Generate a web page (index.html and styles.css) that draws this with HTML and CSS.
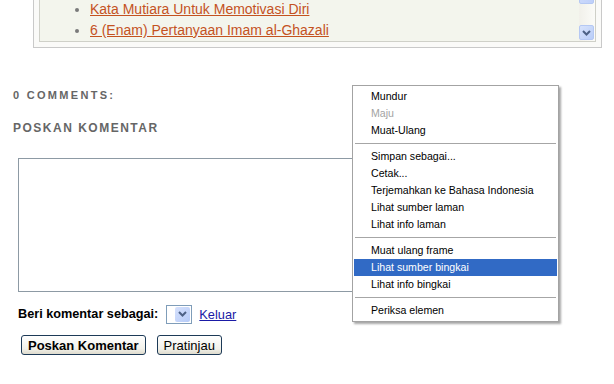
FILE: index.html
```html
<!DOCTYPE html>
<html lang="id">
<head>
    <meta charset="UTF-8">
    <title>Komentar</title>
    <link rel="stylesheet" href="styles.css">
</head>
<body>
    <!-- Related posts box (scrolled to the bottom) -->
    <div class="related">
        <div class="related-inner">
            <ul class="post-list">
                <li><a href="#">Kata Mutiara Untuk Memotivasi Diri</a></li>
                <li><a href="#">6 (Enam) Pertanyaan Imam al-Ghazali</a></li>
            </ul>
            <div class="scrollbar">
                <div class="scroll-thumb"></div>
                <div class="scroll-track"></div>
                <div class="scroll-btn">
                    <svg width="9" height="6" viewBox="0 0 9 6"><path d="M1 1 L4.5 4.5 L8 1" fill="none" stroke="#4d6185" stroke-width="2"/></svg>
                </div>
            </div>
        </div>
    </div>

    <!-- Comments -->
    <div class="comments">
        <h4 class="comments-title">0 Comments:</h4>
        <h4 class="form-title">Poskan Komentar</h4>
        <textarea class="comment-box"></textarea>

        <div class="identity">
            <label>Beri komentar sebagai:</label>
            <span class="select">
                <span class="select-btn">
                    <svg width="9" height="6" viewBox="0 0 9 6"><path d="M1 1 L4.5 4.5 L8 1" fill="none" stroke="#4d6185" stroke-width="2"/></svg>
                </span>
            </span>
            <a href="#" class="logout">Keluar</a>
        </div>

        <div class="actions">
            <button class="btn btn-primary">Poskan Komentar</button>
            <button class="btn">Pratinjau</button>
        </div>
    </div>

    <!-- Browser context menu -->
    <ul class="context-menu">
        <li>Mundur</li>
        <li class="disabled">Maju</li>
        <li>Muat-Ulang</li>
        <li class="sep"></li>
        <li>Simpan sebagai...</li>
        <li>Cetak...</li>
        <li>Terjemahkan ke Bahasa Indonesia</li>
        <li>Lihat sumber laman</li>
        <li>Lihat info laman</li>
        <li class="sep"></li>
        <li>Muat ulang frame</li>
        <li class="active">Lihat sumber bingkai</li>
        <li>Lihat info bingkai</li>
        <li class="sep"></li>
        <li>Periksa elemen</li>
    </ul>
</body>
</html>
```

FILE: styles.css
```css
/* Reset */
* {
    margin: 0;
    padding: 0;
    box-sizing: border-box;
}

body {
    background-color: #fff;
    font-family: "Liberation Sans", Arial, sans-serif;
    font-size: 13px;
    color: #000;
    position: relative;
}

/* Related posts box */
.related {
    margin: -20px 0 0 33px;
    width: 569px;
    padding: 5px;
    border: 1px solid #c9c9c9;
    background-color: #fafaf8;
}

.related-inner {
    display: flex;
    height: 56px;
    border: 1px solid #cfd0c8;
    background-color: #f3f5ed;
}

.post-list {
    flex: 1;
    display: flex;
    flex-direction: column;
    justify-content: flex-end;
    padding-left: 50px;
    list-style: disc;
    color: #7a7a7a;
}

.post-list li {
    line-height: 20px;
}

.post-list a {
    color: #c4521f;
    font-size: 14px;
}

/* Fake scrollbar */
.scrollbar {
    width: 16px;
    display: flex;
    flex-direction: column;
    background: linear-gradient(to right, #f1f0ea, #fbfbf8);
    padding-right: 1px;
}

.scroll-thumb {
    height: 17px;
    border: 1px solid #b5c8f3;
    border-radius: 2px;
    background: linear-gradient(to right, #cad8fb, #bfd0fa);
}

.scroll-track {
    flex: 1;
}

.scroll-btn {
    height: 15px;
    margin-bottom: 1px;
    display: flex;
    align-items: center;
    justify-content: center;
    border: 1px solid #b5c8f3;
    border-radius: 2px;
    background: linear-gradient(to bottom right, #d8e3fc, #b9cdf8);
}

/* Comments */
.comments {
    padding-left: 13px;
}

.comments-title,
.form-title {
    color: #666;
    font-family: "Liberation Sans", Arial, sans-serif;
    font-weight: bold;
    text-transform: uppercase;
}

.comments-title {
    margin-top: 41px;
    font-size: 11px;
    line-height: 13px;
    letter-spacing: 2.3px;
}

.form-title {
    margin-top: 19px;
    font-size: 12px;
    line-height: 14px;
    letter-spacing: 1.5px;
}

.comment-box {
    display: block;
    margin: 23px 0 0 5px;
    width: 420px;
    height: 134px;
    border: 1px solid #8d9aa4;
    resize: none;
    background-color: #fff;
}

.identity {
    display: flex;
    align-items: center;
    margin: 12px 0 0 5px;
    height: 20px;
}

.identity label {
    font-weight: bold;
    font-size: 12.7px;
}

.select {
    display: flex;
    justify-content: flex-end;
    width: 26px;
    height: 19px;
    margin-left: 8px;
    border: 1px solid #7f9db9;
    padding: 1px;
    background-color: #fff;
}

.select-btn {
    width: 15px;
    display: flex;
    align-items: center;
    justify-content: center;
    border-radius: 2px;
    background: linear-gradient(to bottom right, #d6e1fc, #b6cbf8);
}

.logout {
    margin-left: 7px;
    color: #1a1aa6;
    font-size: 12.8px;
}

.actions {
    display: flex;
    gap: 11px;
    margin: 11px 0 0 8px;
}

.btn {
    height: 20px;
    padding: 0 6px;
    border: 1px solid #1d3a57;
    border-radius: 3px;
    background: linear-gradient(to bottom, #ffffff, #f2f1ea 70%, #dedbcd);
    font-family: "Liberation Sans", Arial, sans-serif;
    font-size: 13px;
    color: #000;
}

.btn-primary {
    font-weight: bold;
}

/* Context menu */
.context-menu {
    position: absolute;
    left: 352px;
    top: 85px;
    width: 207px;
    padding: 2px 1px;
    list-style: none;
    border: 1px solid #a3a3a3;
    background-color: #fff;
    box-shadow: 2px 2px 2px rgba(0, 0, 0, 0.35);
    font-family: "Liberation Sans", Arial, sans-serif;
    font-size: 10.6px;
}

.context-menu li {
    height: 17px;
    line-height: 17px;
    padding-left: 17px;
    color: #000;
}

.context-menu .disabled {
    color: #a3a3a3;
}

.context-menu .active {
    background-color: #316ac5;
    color: #fff;
}

.context-menu .sep {
    height: 1px;
    margin: 4px 1px;
    padding: 0;
    background-color: #a6a6a6;
    box-shadow: 0 1px 0 #fff;
}
```
